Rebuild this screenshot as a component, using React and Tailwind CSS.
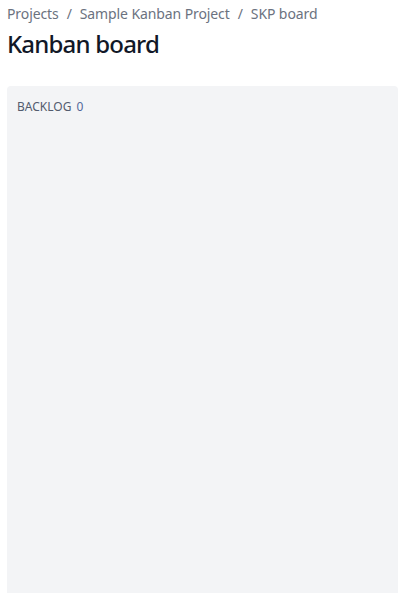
export default function App() {
  return (
    <div className="min-h-screen bg-white px-[7px] pt-[4px] font-['Noto_Sans',sans-serif]">
      <nav className="flex items-center text-sm text-[#6b7280] leading-5 tracking-[-0.1px]">
        <span>Projects</span>
        <span className="px-[8px]">/</span>
        <span>Sample Kanban Project</span>
        <span className="px-[8px]">/</span>
        <span>SKP board</span>
      </nav>
      <h1 className="mt-[4px] text-2xl font-medium leading-8 tracking-[-0.8px] text-[#111827]">Kanban board</h1>
      <div className="mt-[26px] h-[520px] rounded bg-[#f3f4f6] px-[10px] py-[13px]">
        <div className="flex items-center gap-[5px] text-xs uppercase text-[#525b6e]">
          <span>Backlog</span>
          <span className="text-[#53689a]">0</span>
        </div>
      </div>
    </div>
  );
}
